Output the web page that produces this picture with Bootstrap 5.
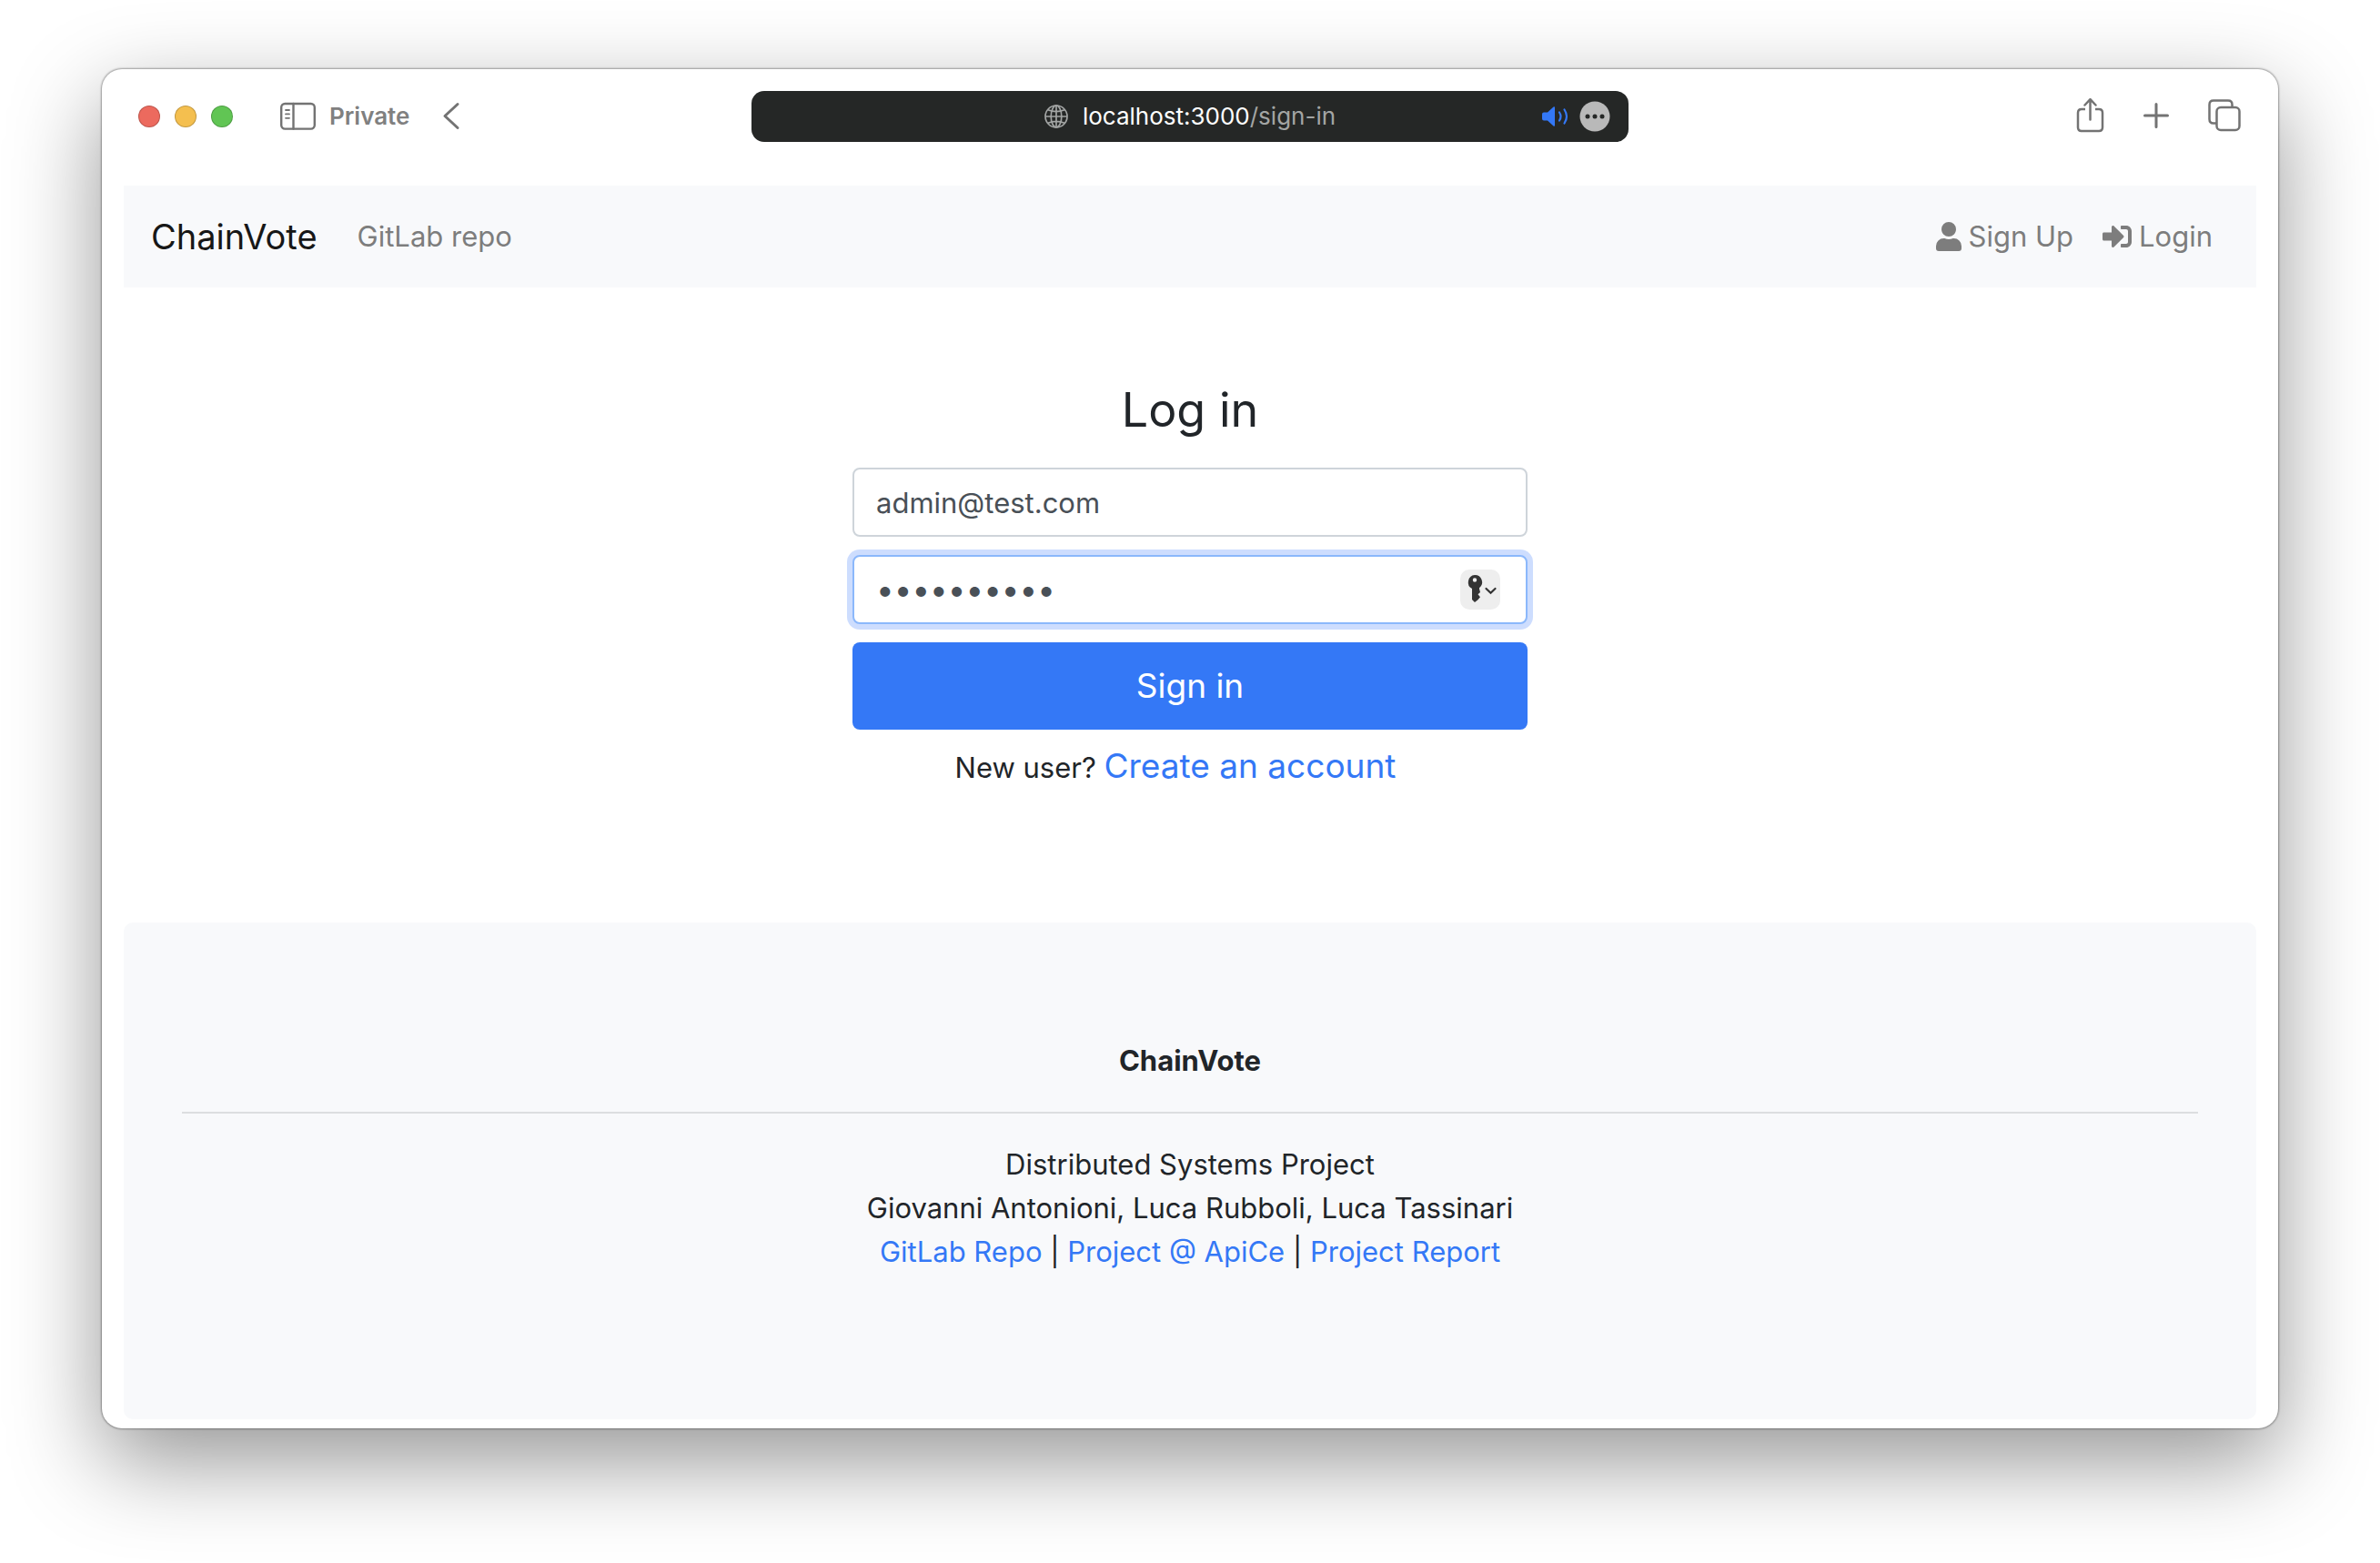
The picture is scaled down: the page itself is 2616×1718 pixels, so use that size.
<!DOCTYPE html>
<html lang="en">
<head>
<meta charset="utf-8">
<meta name="viewport" content="width=device-width, initial-scale=1">
<title>ChainVote</title>
<link href="https://cdn.jsdelivr.net/npm/bootstrap@5.3.0/dist/css/bootstrap.min.css" rel="stylesheet">
<style>
  :root { --ink: #212529; --blue: #3478f6; --muted: #7d7d7d; --tool: #737373; --panel: #f8f9fb; }
  body { font-family: Inter, "Liberation Sans", sans-serif; font-size: 31px; line-height: 48px; color: var(--ink); background: #fff; }
  .desktop { min-height: 100vh; padding: 76px 112px 148px; }
  .browser { border-radius: 22px; box-shadow: 0 0 2px 1px rgba(0,0,0,.34), 0 36px 100px rgba(0,0,0,.42); padding-bottom: 10px; }
  .browser a { text-decoration: none; }
  .toolbar { padding: 24px 40px 48px; }
  .toolbar-side { flex: 1 1 0; height: 56px; }
  .tool { border: 0; background: none; padding: 0; color: var(--tool); display: flex; align-items: center; }
  .tool svg, .site-nav svg, .address svg { display: block; fill: none; stroke: currentColor; }
  .tool-sound { color: var(--blue); }
  .tool-back { margin-left: 36px; }
  .light { width: 24px; height: 24px; border-radius: 50%; border: 1px solid rgba(0,0,0,.2); padding: 0; }
  .light-close { background: #ec6a5e; }
  .light-min { background: #f4bf4f; }
  .light-max { background: #61c554; }
  .mode-label { font-size: 26px; font-weight: 600; color: #808080; line-height: 32px; margin-left: 14px; }
  .address { flex: 0 1 964px; height: 56px; border-radius: 14px; background: #252726; color: #fff; font-size: 26px; line-height: 32px; }
  .address-path, .address .globe { color: #a3a5a4; }
  .address-tools { right: 20px; top: 0; height: 100%; }
  .site-nav { background: var(--panel); margin: 0 24px; height: 112px; padding: 0 48px 0 30px; }
  .site-nav .navbar-brand { font-size: 38px; color: #171717; line-height: 48px; margin: 0; }
  .site-nav .nav-link { color: var(--muted); padding: 0; font-size: 31px; }
  .nav-repo { margin-left: 44px; }
  .login-area { max-width: 742px; width: 100%; padding: 100px 0 140px; }
  .login-title { font-size: 52px; line-height: 70px; font-weight: 400; margin: 0 0 28px; }
  .field { height: 76px; font-size: 31px; line-height: 48px; padding: 0 24px; border: 2px solid #ced4da; border-radius: 8px; color: #495057; }
  .field-active, .field-active:focus { font-size: 35px; border-color: #8bb8fb; box-shadow: 0 0 0 6px #cdddfe; padding-right: 88px; color: #495057; }
  .key-button { right: 30px; top: 16px; width: 44px; height: 44px; border: 0; border-radius: 10px; background: #eee; padding: 0; color: #333; }
  .key-button svg { display: block; }
  .submit { height: 96px; border-radius: 8px; font-size: 37px; line-height: 60px; background: var(--blue); border: 0; color: #fff; }
  .register { padding-right: 32px; line-height: 60px; margin-top: 10px; }
  .register a { font-size: 37px; }
  .register a, .site-footer a { color: var(--blue); }
  .site-footer { background: var(--panel); border-radius: 10px; margin: 0 24px; padding: 128px 64px 48px; }
  .site-footer hr { border-top: 2px solid #dcdee0; opacity: 1; margin: 32px 0; }
</style>
</head>
<body>
<div class="desktop d-flex flex-column">
  <div class="browser d-flex flex-column flex-grow-1 bg-white">
    <header class="toolbar d-flex align-items-center">
      <div class="toolbar-side d-flex align-items-center">
        <div class="d-flex gap-3">
          <button class="light light-close" type="button" aria-label="Close"></button>
          <button class="light light-min" type="button" aria-label="Minimize"></button>
          <button class="light light-max" type="button" aria-label="Zoom"></button>
        </div>
        <button class="tool ms-5 ps-1" type="button" aria-label="Sidebar">
          <svg width="40" height="32" viewBox="0 0 40 32" stroke-width="2.4" stroke-linecap="round"><rect x="1.2" y="2" width="36.6" height="27.6" rx="4"/><path d="M14.5 2v27.6"/><path d="M6 9h4M6 13.400h4M6 17.800h4" stroke-width="1.800"/></svg>
        </button>
        <span class="mode-label">Private</span>
        <button class="tool tool-back" type="button" aria-label="Back">
          <svg width="20" height="32" viewBox="0 0 20 32" stroke-width="3" stroke-linecap="round" stroke-linejoin="round"><path d="M17 2.500 3 15.500 17 28.500"/></svg>
        </button>
      </div>
      <div class="address position-relative d-flex align-items-center justify-content-center">
        <svg class="globe me-3" width="26" height="26" viewBox="0 0 26 26" stroke-width="1.700"><circle cx="13" cy="13" r="12"/><ellipse cx="13" cy="13" rx="5.800" ry="12"/><path d="M13 1v24M1 13h24M3.800 5.800Q13 9.500 22.200 5.800M3.800 20.200Q13 16.500 22.200 20.200"/></svg>
        <span>localhost:3000<span class="address-path">/sign-in</span></span>
        <div class="address-tools position-absolute d-flex align-items-center gap-2">
          <button class="tool tool-sound" type="button" aria-label="Mute">
            <svg width="34" height="28" viewBox="0 0 34 28" stroke-width="2.200" stroke-linecap="round"><path d="M2 9.500h5L13.500 3.500q1.500-1 1.500.8v19.400q0 1.800-1.500.8L7 18.500H3q-2 0-2-2v-5q0-2 2-2z" fill="currentColor" stroke="none"/><path d="M20 9.500q3 4.500 0 9M25.500 6.500q5 7.500 0 15"/></svg>
          </button>
          <button class="tool" type="button" aria-label="More">
            <svg width="34" height="34" viewBox="0 0 34 34"><circle cx="17" cy="17" r="16.500" fill="#b9b9b9" stroke="none"/><g fill="#252726" stroke="none"><circle cx="9" cy="17" r="2.500"/><circle cx="17" cy="17" r="2.500"/><circle cx="25" cy="17" r="2.500"/></g></svg>
          </button>
        </div>
      </div>
      <div class="toolbar-side d-flex align-items-center justify-content-end">
        <button class="tool" type="button" aria-label="Share">
          <svg width="32" height="40" viewBox="0 0 32 40" stroke-width="2.500" stroke-linecap="round" stroke-linejoin="round"><path d="M10 12H6q-4 0-4 4v16q0 4 4 4h19q4 0 4-4V16q0-4-4-4h-4" stroke-linecap="butt"/><path d="M15.500 23.500V1.500M9.500 7.500l6-6.300 6 6.300"/></svg>
        </button>
        <button class="tool ms-4 ps-3" type="button" aria-label="New tab">
          <svg width="32" height="32" viewBox="0 0 32 32" stroke-width="3" stroke-linecap="round"><path d="M16 2.500v25M3.500 15h25"/></svg>
        </button>
        <button class="tool ms-4 ps-3" type="button" aria-label="Tab overview">
          <svg width="38" height="38" viewBox="0 0 38 38" stroke-width="2.500"><rect x="10.500" y="9" width="25" height="25" rx="4.500"/><path d="M10.500 26.500H7q-4.500 0-4.500-4.500V6Q2.500 1.500 7 1.500h16q4.500 0 4.500 4.500v3"/></svg>
        </button>
      </div>
    </header>

    <nav class="site-nav d-flex align-items-center">
      <a class="navbar-brand" href="#">ChainVote</a>
      <a class="nav-link nav-repo" href="#">GitLab repo</a>
      <div class="ms-auto d-flex">
        <a class="nav-link d-flex align-items-center gap-2" href="#">
          <svg width="28" height="32" viewBox="0 0 448 512"><path fill="currentColor" stroke="none" d="M224 256a128 128 0 1 0 0-256 128 128 0 0 0 0 256zm89.600 32h-16.700a174 174 0 0 1-145.800 0h-16.700A134.400 134.400 0 0 0 0 422.400V464a48 48 0 0 0 48 48h352a48 48 0 0 0 48-48v-41.600A134.400 134.400 0 0 0 313.600 288z"/></svg>Sign Up</a>
        <a class="nav-link d-flex align-items-center gap-2 ms-4 ps-2" href="#">
          <svg width="32" height="32" viewBox="0 0 512 512"><path fill="currentColor" stroke="none" d="M416 448h-84c-6.600 0-12-5.400-12-12v-40c0-6.600 5.400-12 12-12h84c17.700 0 32-14.300 32-32V160c0-17.700-14.300-32-32-32h-84c-6.600 0-12-5.400-12-12V76c0-6.600 5.400-12 12-12h84c53 0 96 43 96 96v192c0 53-43 96-96 96zm-47-209L201 71c-15-15-41-4.500-41 17v96H24c-13.300 0-24 10.700-24 24v96c0 13.300 10.700 24 24 24h136v96c0 21.500 26 32 41 17l168-168c9.300-9.400 9.300-24.600 0-34z"/></svg>Login</a>
      </div>
    </nav>

    <main class="login-area mx-auto text-center">
      <h1 class="login-title">Log in</h1>
      <form class="d-grid">
        <label class="d-none" for="email">Email</label>
        <input class="form-control field" id="email" type="email" value="admin@test.com">
        <div class="position-relative my-3 py-1">
          <label class="d-none" for="password">Password</label>
          <input class="form-control field field-active" id="password" type="password" value="adminadmin">
          <button class="key-button position-absolute mt-1" type="button" aria-label="Saved passwords">
            <svg width="44" height="44" viewBox="0 0 44 44"><path fill="currentColor" fill-rule="evenodd" d="M16 6a8 8 0 0 1 5 14.300v1l1 3.700-2.500 2.200 2.500 3-2.500 3L16 36l-3-3V21A8 8 0 0 1 16 6zm0 3.300a2.200 2.200 0 1 0 0 4.400 2.200 2.200 0 0 0 0-4.400z"/><path d="m28.500 21 5 4.800 5-4.800" fill="none" stroke="currentColor" stroke-width="2.200" stroke-linecap="round"/></svg>
          </button>
        </div>
        <button class="btn submit" type="submit">Sign in</button>
      </form>
      <p class="register mb-0">New user? <a href="#">Create an account</a></p>
    </main>

    <footer class="site-footer flex-grow-1 text-center">
      <div class="fw-bold">ChainVote</div>
      <hr>
      <div>Distributed Systems Project</div>
      <div>Giovanni Antonioni, Luca Rubboli, Luca Tassinari</div>
      <div><a href="#">GitLab Repo</a> | <a href="#">Project @ ApiCe</a> | <a href="#">Project Report</a></div>
    </footer>
  </div>
</div>
<script src="https://cdn.jsdelivr.net/npm/bootstrap@5.3.0/dist/js/bootstrap.bundle.min.js"></script>
</body>
</html>
